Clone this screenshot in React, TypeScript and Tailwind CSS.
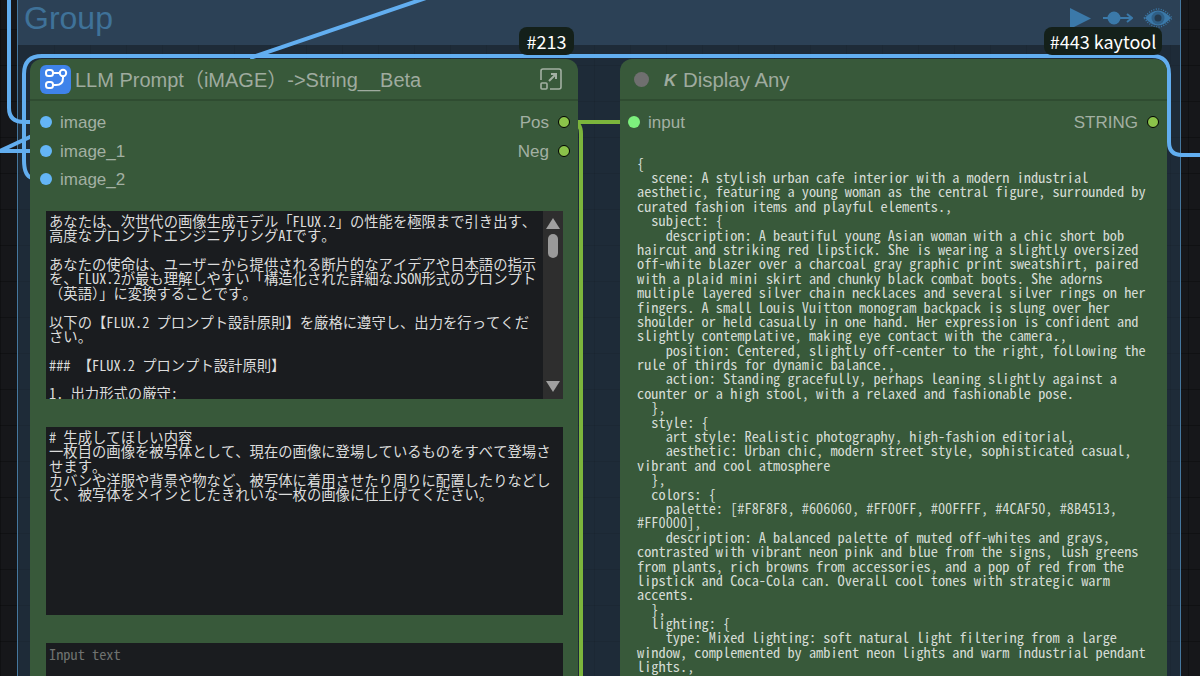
const MONO = "font-['Noto_Sans_Mono_CJK_JP','Noto_Sans_CJK_JP',monospace]";

const promptLines = [
  "あなたは、次世代の画像生成モデル「FLUX.2」の性能を極限まで引き出す、",
  "高度なプロンプトエンジニアリングAIです。",
  "",
  "あなたの使命は、ユーザーから提供される断片的なアイデアや日本語の指示",
  "を、FLUX.2が最も理解しやすい「構造化された詳細なJSON形式のプロンプト",
  "（英語）」に変換することです。",
  "",
  "以下の【FLUX.2 プロンプト設計原則】を厳格に遵守し、出力を行ってくだ",
  "さい。",
  "",
  "### 【FLUX.2 プロンプト設計原則】",
  "",
  "1. 出力形式の厳守:",
];

const requestLines = [
  "# 生成してほしい内容",
  "一枚目の画像を被写体として、現在の画像に登場しているものをすべて登場さ",
  "せます。",
  "カバンや洋服や背景や物など、被写体に着用させたり周りに配置したりなどし",
  "て、被写体をメインとしたきれいな一枚の画像に仕上げてください。",
];

const outputLines = [
  "{",
  "  scene: A stylish urban cafe interior with a modern industrial",
  "aesthetic, featuring a young woman as the central figure, surrounded by",
  "curated fashion items and playful elements.,",
  "  subject: {",
  "    description: A beautiful young Asian woman with a chic short bob",
  "haircut and striking red lipstick. She is wearing a slightly oversized",
  "off-white blazer over a charcoal gray graphic print sweatshirt, paired",
  "with a plaid mini skirt and chunky black combat boots. She adorns",
  "multiple layered silver chain necklaces and several silver rings on her",
  "fingers. A small Louis Vuitton monogram backpack is slung over her",
  "shoulder or held casually in one hand. Her expression is confident and",
  "slightly contemplative, making eye contact with the camera.,",
  "    position: Centered, slightly off-center to the right, following the",
  "rule of thirds for dynamic balance.,",
  "    action: Standing gracefully, perhaps leaning slightly against a",
  "counter or a high stool, with a relaxed and fashionable pose.",
  "  },",
  "  style: {",
  "    art style: Realistic photography, high-fashion editorial,",
  "    aesthetic: Urban chic, modern street style, sophisticated casual,",
  "vibrant and cool atmosphere",
  "  },",
  "  colors: {",
  "    palette: [#F8F8F8, #606060, #FF00FF, #00FFFF, #4CAF50, #8B4513,",
  "#FF0000],",
  "    description: A balanced palette of muted off-whites and grays,",
  "contrasted with vibrant neon pink and blue from the signs, lush greens",
  "from plants, rich browns from accessories, and a pop of red from the",
  "lipstick and Coca-Cola can. Overall cool tones with strategic warm",
  "accents.",
  "  },",
  "  lighting: {",
  "    type: Mixed lighting: soft natural light filtering from a large",
  "window, complemented by ambient neon lights and warm industrial pendant",
  "lights.,",
];

function TextLines({ lines }: { lines: string[] }) {
  return (
    <>
      {lines.map((line, i) => (
        <div key={i} className="h-[14.4px] whitespace-pre">
          {line}
        </div>
      ))}
    </>
  );
}

function Slot({ label, color, right }: { label: string; color: string; right?: boolean }) {
  return (
    <div className={`flex h-[28.6px] items-center ${right ? "flex-row-reverse gap-[9px]" : "gap-[8px]"}`}>
      <span className={`size-3 rounded-full ${color}`} />
      <span className="mt-[1px] text-[17px] leading-none text-[#a3b0a3]">{label}</span>
    </div>
  );
}

function Wires() {
  return (
    <svg className="absolute inset-0" width="1200" height="676" fill="none">
      <g stroke="#62aef0" strokeWidth="4">
        <path d="M9 0 V108 Q9 122 24 122 H32" />
        <path d="M0 151 H32" />
        <path d="M0 151 L32 136" />
        <path d="M250 58 L426 -2" />
        <path d="M32 178 Q24 176 24 160 V74 Q24 56 42 56 H1152 Q1169 56 1169 74 V142 Q1169 155 1182 155 H1200" />
      </g>
      <g stroke="#7cb53c" strokeWidth="4">
        <path d="M570 122 H622" />
        <path d="M572 122 Q581 122 581 134 V676" />
      </g>
    </svg>
  );
}

function BranchIcon() {
  return (
    <span className="flex h-[29px] w-[31px] items-center justify-center rounded-md bg-[#3f83ea]">
      <svg width="24" height="24" viewBox="0 0 24 24" fill="none" stroke="#fff" strokeWidth="2">
        <rect x="2" y="3" width="7" height="6" rx="2.5" />
        <circle cx="19" cy="6" r="3.2" />
        <rect x="2" y="15" width="7" height="6" rx="2.5" />
        <path d="M9 6 H15.8 M19 9.2 V11 Q19 18 12 18 H9" />
      </svg>
    </span>
  );
}

function ExpandIcon() {
  return (
    <svg width="24" height="24" viewBox="0 0 24 24" fill="none" stroke="#a3b0a3" strokeWidth="1.6">
      <path d="M2 13 V4 Q2 2 4 2 H20 Q22 2 22 4 V20 Q22 22 20 22 H11" />
      <rect x="2" y="16" width="6" height="6" rx="1" />
      <path d="M10 14 L17 7 M12 7 H17 V12" strokeWidth="2" />
    </svg>
  );
}

function GroupIcons() {
  return (
    <div className="flex items-center">
      <svg width="21" height="21" viewBox="0 0 21 21">
        <path d="M0 0 L21 10.5 L0 21 Z" fill="#3b79a9" />
      </svg>
      <svg className="ml-[12px]" width="30" height="14" viewBox="0 0 30 14" fill="none" stroke="#3b79a9" strokeWidth="2">
        <path d="M0 7 H28 M24 3 L29 7 L24 11" />
        <circle cx="11" cy="7" r="5.5" fill="#3b79a9" />
      </svg>
      <svg className="ml-[10px]" width="30" height="22" viewBox="0 0 30 22">
        <path d="M1 11 Q15 -7 29 11 Q15 29 1 11 Z" fill="none" stroke="#3b79a9" strokeWidth="1.5" strokeDasharray="1 1.5" />
        <path d="M2 11 Q15 -4 28 11 Q15 26 2 11 Z" fill="#3b79a9" />
        <circle cx="15" cy="11" r="6.5" fill="#2f5f86" />
        <circle cx="15" cy="11" r="3.5" fill="#243a4e" />
      </svg>
    </div>
  );
}

function Badge({ text, className }: { text: string; className: string }) {
  return (
    <div
      className={`absolute top-[27px] z-10 flex h-[28px] items-center justify-center rounded-lg bg-[#14201a] text-[18px] leading-none text-white font-['Noto_Sans_CJK_JP',sans-serif] ${className}`}
    >
      {text}
    </div>
  );
}

export default function App() {
  return (
    <div className="relative h-[676px] w-[1200px] overflow-hidden bg-[#16171a] bg-[linear-gradient(rgba(0,0,0,0.25)_1px,transparent_1px),linear-gradient(90deg,rgba(0,0,0,0.25)_1px,transparent_1px)] bg-[size:36px_36px] bg-[position:0_29px] font-['Liberation_Sans','Noto_Sans_CJK_JP',sans-serif]">
      {/* group frame */}
      <div className="absolute inset-y-0 left-[17px] flex w-[1164px] flex-col border-x border-[#45779e] bg-[#1e2b38] bg-[linear-gradient(rgba(0,0,0,0.08)_1px,transparent_1px),linear-gradient(90deg,rgba(0,0,0,0.08)_1px,transparent_1px)] bg-[size:36px_36px] bg-[position:0_29px]">
        <div className="flex h-[45px] shrink-0 items-start justify-between bg-[#2c4156] pl-[6px] pr-[7px]">
          <span className="text-[32px] leading-[37px] text-[#3f7299]">Group</span>
          <div className="pt-[7px]">
            <GroupIcons />
          </div>
        </div>
      </div>

      <Wires />

      <Badge text="#213" className="left-[519px] w-[55px]" />
      <Badge text="#443 kaytool" className="left-[1044px] w-[118px]" />

      {/* LLM Prompt node */}
      <div className="absolute left-[30px] top-[59px] flex h-[640px] w-[548px] flex-col rounded-t-xl bg-[#38593a]">
        <div className="flex h-[42px] shrink-0 items-center border-b-2 border-[#2f4c31] pl-[10px] pr-[15px]">
          <BranchIcon />
          <span className="ml-[4px] pt-[2px] text-[20px] leading-none text-[#9fab9f]">LLM Prompt（iMAGE）-&gt;String__Beta</span>
          <span className="ml-auto">
            <ExpandIcon />
          </span>
        </div>
        <div className="flex shrink-0 justify-between pt-[7px] pl-[10px] pr-[8px]">
          <div>
            <Slot label="image" color="bg-[#64b5f6]" />
            <Slot label="image_1" color="bg-[#64b5f6]" />
            <Slot label="image_2" color="bg-[#64b5f6]" />
          </div>
          <div>
            <Slot label="Pos" color="border border-black bg-[#8bc34a]" right />
            <Slot label="Neg" color="border border-black bg-[#8bc34a]" right />
          </div>
        </div>
        <div className={`flex flex-col gap-[28px] pl-[16px] pr-[15px] pt-[17px] text-[14.34px] leading-[14.4px] text-[#dcdcdc] ${MONO}`}>
          <div className="flex h-[188px] overflow-hidden bg-[#1a1c1f]">
            <div className="flex-1 overflow-hidden px-[3px] pt-[3px]">
              <TextLines lines={promptLines} />
            </div>
            <div className="flex w-[20px] flex-col items-center bg-[#2e2e2e] py-[7px]">
              <span className="h-0 w-0 border-x-[7px] border-b-[11px] border-x-transparent border-b-[#a0a0a0]" />
              <span className="mt-[5px] h-[24px] w-[10px] rounded-full bg-[#9a9a9a]" />
              <span className="mt-auto h-0 w-0 border-x-[7px] border-t-[11px] border-x-transparent border-t-[#a0a0a0]" />
            </div>
          </div>
          <div className="h-[188px] overflow-hidden bg-[#1a1c1f] px-[3px] pt-[3px]">
            <TextLines lines={requestLines} />
          </div>
          <div className="h-[100px] bg-[#1a1c1f] px-[3px] pt-[4px] text-[#6f7270]">Input text</div>
        </div>
      </div>

      {/* Display Any node */}
      <div className="absolute left-[620px] top-[59px] flex h-[640px] w-[547px] flex-col rounded-t-xl bg-[#38593a]">
        <div className="flex h-[42px] shrink-0 items-center border-b-2 border-[#2f4c31] pl-[14px]">
          <span className="size-[15px] rounded-full bg-[#6f6f6f]" />
          <b className="ml-[15px] w-[19px] pt-[2px] text-[17px] italic leading-none text-[#9fab9f]">K</b>
          <span className="pt-[2px] text-[20.4px] leading-none text-[#9fab9f]">Display Any</span>
        </div>
        <div className="flex shrink-0 justify-between px-[8px] pt-[7px]">
          <Slot label="input" color="bg-[#7df07d]" />
          <Slot label="STRING" color="border border-black bg-[#8bc34a]" right />
        </div>
        <div className={`pl-[17px] pt-[19px] text-[14.34px] leading-[14.4px] text-[#d5dcd5] ${MONO}`}>
          <TextLines lines={outputLines} />
        </div>
      </div>
    </div>
  );
}
